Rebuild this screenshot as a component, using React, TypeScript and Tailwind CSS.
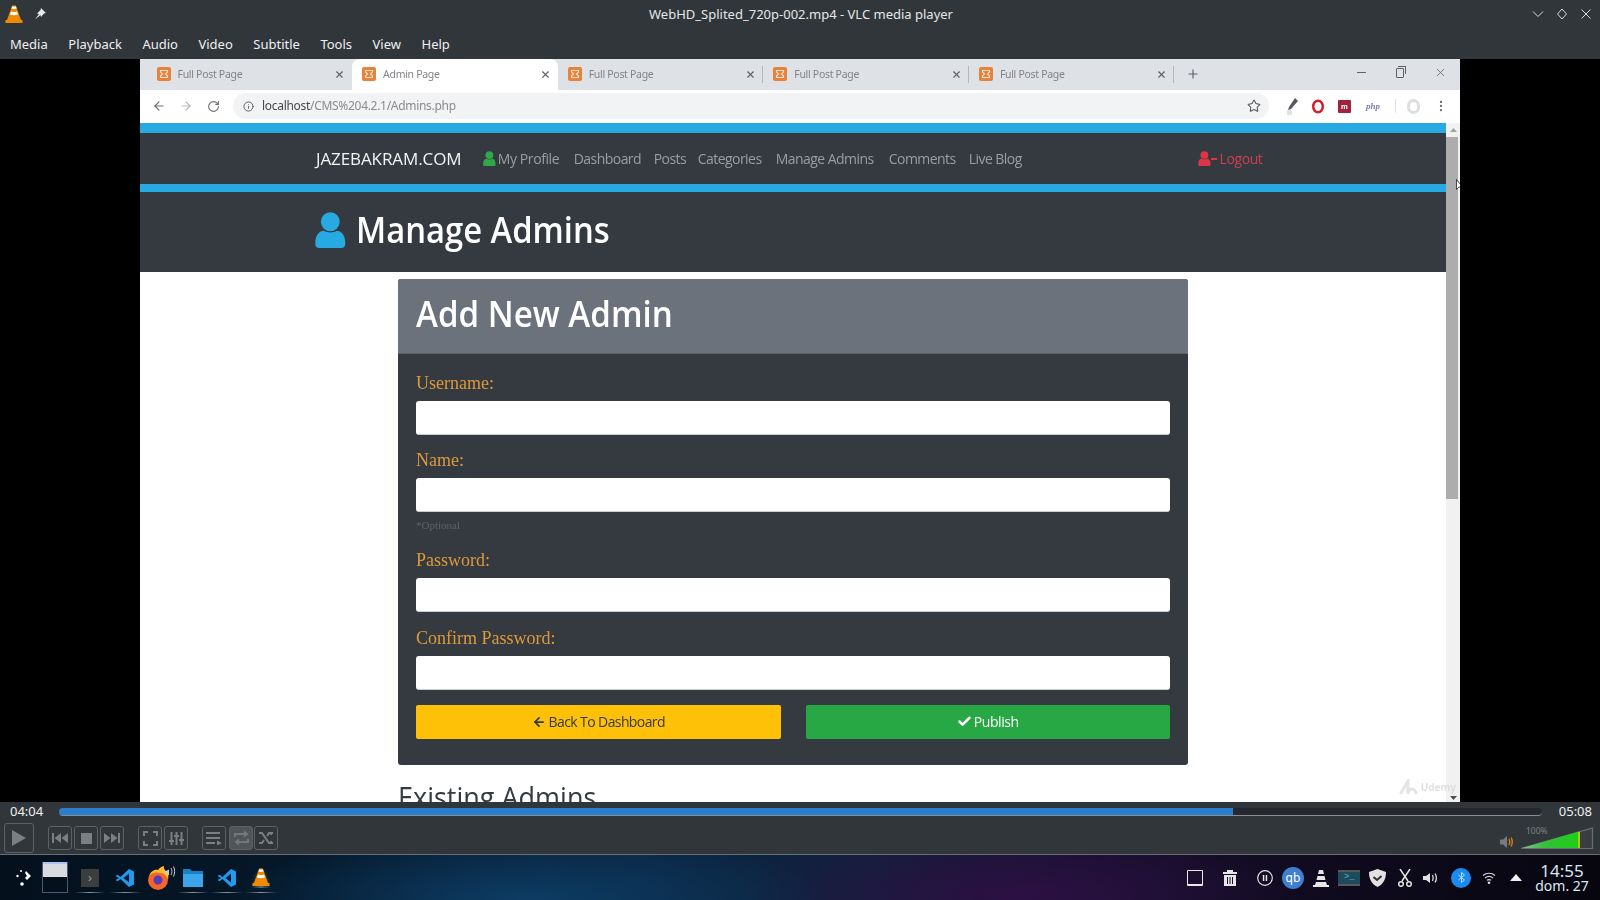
import { ArrowLeft, ArrowRight, Check, Info, MoreVertical, Plus, RotateCw, Star, X } from 'lucide-react';

const MENU = ['Media', 'Playback', 'Audio', 'Video', 'Subtitle', 'Tools', 'View', 'Help'];

const TABS = [
  { title: 'Full Post Page', active: false },
  { title: 'Admin Page', active: true },
  { title: 'Full Post Page', active: false },
  { title: 'Full Post Page', active: false },
  { title: 'Full Post Page', active: false },
];

const NAV = [
  { label: 'Dashboard', w: 'w-[66px]' },
  { label: 'Posts', w: 'w-[30px]' },
  { label: 'Categories', w: 'w-[64px]' },
  { label: 'Manage Admins', w: 'w-[99px]' },
  { label: 'Comments', w: 'w-[66px]' },
  { label: 'Live Blog', w: 'w-[55px]' },
];

function Cone({ size = 20, stripes = '#fff' }: { size?: number; stripes?: string }) {
  return (
    <svg width={size} height={size} viewBox="0 0 20 20">
      <path d="M8.200 1.500h3.600L17 16H3z" fill="#f08a00" />
      <path d="M7 7.500c2 .8 4 .8 6 0l1 3c-2.600 1-5.400 1-8 0z" fill={stripes} />
      <path d="M8 2.500h4l.6 2c-1.700.6-3.500.6-5.200 0z" fill={stripes} />
      <path d="M1.500 16h17v3h-17z" fill="#f08a00" />
    </svg>
  );
}

function Favicon() {
  return (
    <svg width="14" height="14" viewBox="0 0 14 14" className="shrink-0">
      <rect width="14" height="14" rx="2" fill="#e8823a" />
      <path d="M3.500 3.500h7V5l-2 2 2 2v1.500h-7V9l2-2-2-2z" stroke="#fbe3d2" strokeWidth="1.100" fill="none" />
    </svg>
  );
}

function PersonIcon({ size, color }: { size: number; color: string }) {
  return (
    <svg width={size * 0.85} height={size} viewBox="0 0 20 24" className="shrink-0">
      <circle cx="10" cy="6.500" r="6.300" fill={color} />
      <path d="M0 21c0-6 3-8.500 5.500-8.500 3 1.500 6 1.500 9 0C17 12.500 20 15 20 21c0 2-1 3-2.500 3h-15C1 24 0 23 0 21z" fill={color} />
    </svg>
  );
}

function ChromeTab({ title, active, divider }: { title: string; active: boolean; divider: boolean }) {
  return (
    <div className={`relative flex h-[31px] w-[205.600px] shrink-0 items-center pl-[10px] pr-[7px] ${active ? 'rounded-t-lg bg-white' : ''}`}>
      <Favicon />
      <span className="ml-[7px] flex-1 text-[10.500px] tracking-[-0.3px] text-[#808488]">{title}</span>
      <X size={11} strokeWidth={2.500} className="text-[#5f6368]" />
      {divider && <div className="absolute right-0 top-[7px] h-[17px] w-px bg-[#b4b7bb]" />}
    </div>
  );
}

function Field({ label, mt }: { label: string; mt: string }) {
  return (
    <div className={mt}>
      <div className="font-['Liberation_Serif',serif] text-[18px] leading-[22px] text-[#dd9a3c]">{label}</div>
      <div className="mt-[7px] h-[34px] rounded-[3px] border-b border-[#c9ccd0] bg-white" />
    </div>
  );
}

function CtlButton({ children, active, big }: { children: React.ReactNode; active?: boolean; big?: boolean }) {
  return (
    <div
      className={`flex shrink-0 items-center justify-center rounded-[3px] border border-[#5d6165] ${big ? 'h-[30px] w-[30px]' : 'h-[24px] w-[24px]'} ${active ? 'bg-[#50555a]' : ''}`}
    >
      {children}
    </div>
  );
}

function Controls() {
  const c = '#7b7e82';
  return (
    <div className="flex h-[32px] items-center pl-[4px] pr-[6px]">
      <CtlButton big>
        <svg width="16" height="18" viewBox="0 0 16 18"><path d="M1 1v16l14-8z" fill={c} /></svg>
      </CtlButton>
      <div className="ml-[14px] flex gap-[2px]">
        <CtlButton>
          <svg width="16" height="10" viewBox="0 0 16 10"><path d="M0 0h2v10H0zM9 0v10L2.500 5zM16 0v10L9.500 5z" fill={c} /></svg>
        </CtlButton>
        <CtlButton>
          <svg width="11" height="11" viewBox="0 0 11 11"><path d="M0 0h11v11H0z" fill={c} /></svg>
        </CtlButton>
        <CtlButton>
          <svg width="16" height="10" viewBox="0 0 16 10"><path d="M16 0h-2v10h2zM7 0v10l6.500-5zM0 0v10l6.500-5z" fill={c} /></svg>
        </CtlButton>
      </div>
      <div className="ml-[14px] flex gap-[2px]">
        <CtlButton>
          <svg width="15" height="15" viewBox="0 0 15 15" fill="none" stroke={c} strokeWidth="2"><path d="M1 5V1h4M10 1h4v4M14 10v4h-4M5 14H1v-4" /></svg>
        </CtlButton>
        <CtlButton>
          <svg width="15" height="15" viewBox="0 0 15 15" fill="none" stroke={c} strokeWidth="2"><path d="M2.500 1v13M7.500 1v13M12.500 1v13M0 10h5M5 5h5M10 9h5" /></svg>
        </CtlButton>
      </div>
      <div className="ml-[14px] flex gap-[3px]">
        <CtlButton>
          <svg width="16" height="13" viewBox="0 0 16 13"><path d="M0 0h14v2H0zM0 5h14v2H0zM0 10h9v2H0zM11 8.500l5 2.500-5 2.500z" fill={c} /></svg>
        </CtlButton>
        <CtlButton active>
          <svg width="15" height="14" viewBox="0 0 15 14" fill="none" stroke="#74777b" strokeWidth="2"><path d="M1 6V3h11M10 0.500l3 2.500-3 2.500M14 8v3H3M5 8.500L2 11l3 2.500" /></svg>
        </CtlButton>
        <div className="-ml-[2px]">
          <CtlButton>
            <svg width="15" height="13" viewBox="0 0 15 13" fill="none" stroke={c} strokeWidth="2"><path d="M0 1h3l7 10h4M0 11h3l2-3M8 4l2-3h4M12 0v3M12 9v3" /></svg>
          </CtlButton>
        </div>
      </div>
      <div className="flex-1" />
      <svg width="14" height="14" viewBox="0 0 14 14" className="mt-[8px]" fill="none">
        <path d="M0 4.500h3L7 1v12L3 9.500H0z" fill="#77797d" />
        <path d="M9 4c1 2 1 4 0 6M11 2.500c1.800 3 1.800 6 0 9" stroke="#d97b10" strokeWidth="1.400" />
      </svg>
      <div className="relative ml-[6px] h-[24px] w-[74px]">
        <span className="absolute left-[6px] top-[0px] font-['Noto_Sans',sans-serif] text-[8.500px] leading-[10px] text-[#7e8185]">100%</span>
        <svg width="74" height="24" viewBox="0 0 74 24" className="absolute inset-0">
          <path d="M1 22.500L72.500 2v20.500z" fill="#3a3e42" stroke="#6b6e72" strokeWidth="1.200" />
          <defs>
            <linearGradient id="volFill" x1="0" x2="1" y1="0" y2="0">
              <stop offset="0" stopColor="#7fc78a" />
              <stop offset="0.4" stopColor="#35bf3a" />
              <stop offset="1" stopColor="#1ccf14" />
            </linearGradient>
          </defs>
          <path d="M2 22L59 5.500V22z" fill="url(#volFill)" />
          <path d="M58 6h2v16h-2z" fill="#b6c90f" />
        </svg>
      </div>
    </div>
  );
}

function VsCode() {
  return (
    <svg width="20" height="20" viewBox="0 0 20 20">
      <path d="M14 1l5 2.500v13L14 19 5.500 11l-3 2.300L.5 12 4 10 .5 8l2-1.300 3 2.300z" fill="#1f9cf0" />
      <path d="M14 5.500L8.500 10l5.500 4.500z" fill="#071a2c" />
    </svg>
  );
}

// task manager entry: icon with the thin "running" line under it
function Task({ children, ml }: { children: React.ReactNode; ml: string }) {
  return (
    <div className={`relative flex h-[45px] shrink-0 items-center justify-center ${ml}`}>
      {children}
      <div className="absolute bottom-[7px] left-[-6px] right-[-6px] h-px bg-[linear-gradient(90deg,transparent,#8a96a2,transparent)]" />
    </div>
  );
}

function Taskbar() {
  return (
    <div className="flex h-[45px] items-center bg-[radial-gradient(ellipse_300px_70px_at_530px_45px,#0d3c64,transparent),radial-gradient(ellipse_280px_70px_at_1020px_40px,#2c1044,transparent),linear-gradient(90deg,#04101c_0%,#05192b_20%,#0a2540_40%,#10203c_55%,#170f2c_68%,#0e0a1c_85%,#07060f_100%)] pl-[16px] font-['Noto_Sans',sans-serif] text-white">
      <svg width="16" height="18" viewBox="0 0 16 18" className="shrink-0">
        <circle cx="5" cy="2" r="1" fill="#fff" />
        <circle cx="1.500" cy="7" r="1.200" fill="#fff" />
        <path d="M10 2l5 5-4 4-2-2 2-2-2-3z" fill="#fff" />
        <circle cx="6" cy="15" r="1.800" fill="#fff" />
      </svg>
      <div className="ml-[10px] h-[31px] w-[26px] shrink-0 border-x border-b border-[#4a5a6a] bg-[#04101c]">
        <div className="h-[15px] border-t-2 border-[#a9c4f0] bg-[#d8dce2]" />
      </div>
      <Task ml="ml-[13px]">
        <div className="flex h-[18px] w-[18px] items-center justify-center bg-[#3a3e3e] text-[13px] leading-none text-[#9a9d9d]">›</div>
      </Task>
      <Task ml="ml-[16px]"><VsCode /></Task>
      <svg width="28" height="26" viewBox="0 0 28 26" className="ml-[13px] shrink-0">
        <circle cx="10" cy="15" r="10" fill="#f2652b" />
        <path d="M1 11C3 5 8 4 10 5c2-3 5-4 6-4-.5 2 0 3 2 5 3 3 2.500 6 2 9-1-4-4-7-7-7-2 0-5-1-6 0-3 0-5 1-6 3z" fill="#fdb92e" />
        <circle cx="10" cy="15" r="4.500" fill="#5b3bb5" />
        <path d="M16 7l5-2.500v6z" fill="#c9ccd0" />
        <path d="M23 3c1.200 2 1.200 5 0 7M25.500 1.500c1.500 3 1.500 7 0 10" stroke="#c9ccd0" strokeWidth="1" fill="none" />
      </svg>
      <Task ml="ml-[7px]">
        <svg width="20" height="19" viewBox="0 0 20 19">
          <path d="M0 1h7l2 2h11v16H0z" fill="#1b7fc4" />
          <path d="M0 6h20v13H0z" fill="#3aa5e8" />
        </svg>
      </Task>
      <Task ml="ml-[14px]"><VsCode /></Task>
      <Task ml="ml-[14px]">
        <div className="rounded-t-full bg-[radial-gradient(ellipse_at_bottom,#5c6a78,transparent_70%)] pb-[1px]">
          <Cone size={20} />
        </div>
      </Task>

      <div className="flex-1" />

      <div className="h-[16px] w-[16px] shrink-0 rounded-[1px] border border-b-2 border-[#e8e8e8]" />
      <svg width="14" height="16" viewBox="0 0 14 16" className="ml-[20px] shrink-0">
        <path d="M0 2h4V0h6v2h4v2H0zM1 5h12v11H1z" fill="#e6e6e6" />
        <path d="M4.500 7v7M7 7v7M9.500 7v7" stroke="#1b0d2c" />
      </svg>
      <svg width="16" height="16" viewBox="0 0 16 16" className="ml-[20px] shrink-0">
        <circle cx="8" cy="8" r="7.300" fill="none" stroke="#e6e6e6" strokeWidth="1.200" />
        <path d="M5.800 5h1.500v6H5.800zM8.700 5h1.500v6H8.700z" fill="#e6e6e6" />
      </svg>
      <div className="ml-[9px] flex h-[22px] w-[22px] shrink-0 items-center justify-center rounded-full bg-[#3f7fd0] text-[12px] leading-none">qb</div>
      <svg width="16" height="18" viewBox="0 0 16 18" className="ml-[9px] shrink-0">
        <path d="M6 1h4l1 4H5zM4.500 7h7l1 4h-9zM3 13h10l1 3H2zM0 16h16v2H0z" fill="#e6e6e6" />
      </svg>
      <div className="ml-[9px] flex h-[16px] w-[22px] shrink-0 items-center border-y-2 border-[#55595c] bg-[#1e4a5c] pl-[6px] font-['Liberation_Mono',monospace] text-[9px] leading-none text-[#4ab3e0]">&gt;_</div>
      <svg width="17" height="18" viewBox="0 0 17 18" className="ml-[9px] shrink-0">
        <path d="M8.500 0L17 3c0 7-2.500 12-8.500 15C2.500 15 0 10 0 3z" fill="#e2e2e2" />
        <path d="M4.500 8l3.500 3 4.500-4" stroke="#333" strokeWidth="2" fill="none" />
      </svg>
      <svg width="14" height="18" viewBox="0 0 14 18" className="ml-[12px] shrink-0" fill="none" stroke="#e6e6e6" strokeWidth="1.500">
        <path d="M2 0l8 12M12 0L4 12" />
        <circle cx="3" cy="15" r="2.300" />
        <circle cx="11" cy="15" r="2.300" />
      </svg>
      <svg width="16" height="14" viewBox="0 0 16 14" className="ml-[11px] shrink-0" fill="none">
        <path d="M0 5h3l4-3v10L3 9H0z" fill="#e0e0e0" />
        <path d="M9.500 4c1 2 1 4 0 6M12 2.500c1.800 3 1.800 6 0 9" stroke="#e0e0e0" strokeWidth="1.300" />
      </svg>
      <div className="ml-[12px] flex h-[20px] w-[20px] shrink-0 items-center justify-center rounded-full bg-[#1a8cf0]">
        <svg width="7" height="11" viewBox="0 0 7 11" fill="none" stroke="#cfe6fb" strokeWidth="0.900"><path d="M0.500 3l6 5-3 2.500v-10l3 2.500-6 5" /></svg>
      </div>
      <svg width="14" height="12" viewBox="0 0 14 12" className="ml-[11px] shrink-0" fill="none" stroke="#d8d8d8" strokeWidth="1.200">
        <path d="M1 3.500c3.500-3 8.500-3 12 0M3 6c2.500-2 5.500-2 8 0M5 8.300c1.300-.9 2.700-.9 4 0" />
        <circle cx="7" cy="10.800" r="0.700" fill="#d8d8d8" />
      </svg>
      <svg width="12" height="7" viewBox="0 0 12 7" className="ml-[14px] shrink-0"><path d="M6 0l6 7H0z" fill="#f0f0f0" /></svg>
      <div className="ml-[14px] mr-[12px] flex w-[52px] shrink-0 flex-col items-center whitespace-nowrap text-[#dbe6f2]">
        <span className="text-[17px] leading-[17px]">14:55</span>
        <span className="text-[14px] leading-[14px]">dom. 27</span>
      </div>
    </div>
  );
}

export default function App() {
  return (
    <div className="flex h-[900px] w-[1600px] flex-col overflow-hidden bg-black font-['Noto_Sans',sans-serif]">
      {/* VLC title bar + menu */}
      <div className="flex h-[29px] items-center bg-[#31363b] pl-[4px] pr-[8px]">
        <Cone size={20} />
        <svg width="12" height="12" viewBox="0 0 12 12" className="ml-[10px]">
          <path d="M7 0l5 5-2 .5L7 9 6.500 7 1 11.500 5 6 3 5.500 6.500 2z" fill="#e8e8e8" />
        </svg>
        <div className="ml-[24px] flex-1 text-center text-[13px] text-[#e4e6e8]">WebHD_Splited_720p-002.mp4 - VLC media player</div>
        <div className="flex items-center gap-[12px] text-[#d8dadc]">
          <svg width="12" height="12" viewBox="0 0 12 12" fill="none" stroke="currentColor"><path d="M1 3.500l5 5 5-5" /></svg>
          <svg width="12" height="12" viewBox="0 0 12 12" fill="none" stroke="currentColor"><path d="M6 1l4.500 5L6 11 1.500 6z" /></svg>
          <svg width="12" height="12" viewBox="0 0 12 12" fill="none" stroke="currentColor"><path d="M1.500 1.500l9 9M10.500 1.500l-9 9" /></svg>
        </div>
      </div>
      <div className="flex h-[30px] items-start gap-[20.500px] bg-[#31363b] pl-[10px] pt-[2px] text-[13px] leading-[26px] text-[#eff0f1]">
        {MENU.map((m) => (
          <span key={m}>{m}</span>
        ))}
      </div>

      {/* video area */}
      <div className="flex h-[744px] justify-center overflow-hidden">
        <div className="flex h-[744px] w-[1320px] flex-col overflow-hidden bg-white blur-[0.4px]">
          {/* tab strip */}
          <div className="flex h-[31px] shrink-0 items-center bg-[#dee1e6] pl-[6.500px]">
            {TABS.map((t, i) => (
              <ChromeTab key={i} title={t.title} active={t.active} divider={i >= 2} />
            ))}
            <Plus size={14} strokeWidth={2} className="ml-[12px] text-[#5f6368]" />
            <div className="flex-1" />
            <div className="mb-[3px] mr-[13px] flex items-center gap-[30px] text-[#5f6368]">
              <div className="h-[1px] w-[9px] bg-[#5f6368]" />
              <div className="relative h-[10px] w-[8px] rounded-[1px] border border-[#5f6368]">
                <div className="absolute -right-[3px] -top-[3px] h-[8px] w-[8px] border-r border-t border-[#5f6368]" />
              </div>
              <X size={13} strokeWidth={1.500} />
            </div>
          </div>
          {/* toolbar */}
          <div className="flex h-[33px] shrink-0 items-center bg-white pl-[12px] pr-[12px]">
            <ArrowLeft size={14} strokeWidth={2} className="text-[#6b6e72]" />
            <ArrowRight size={14} strokeWidth={2} className="ml-[13px] text-[#b5b8bb]" />
            <RotateCw size={13} strokeWidth={2} className="ml-[14px] text-[#6b6e72]" />
            <div className="ml-[13px] flex h-[26px] w-[1036px] items-center rounded-full bg-[#f1f3f4] pl-[10px] pr-[8px]">
              <Info size={11} strokeWidth={2} className="text-[#55585c]" />
              <span className="ml-[8px] text-[12px] tracking-[-0.3px] text-[#8a8d90]">
                <span className="text-[#45484b]">localhost</span>/CMS%204.2.1/Admins.php
              </span>
              <div className="flex-1" />
              <Star size={14} strokeWidth={1.800} className="text-[#55585c]" />
            </div>
            <svg width="14" height="18" viewBox="0 0 14 18" className="ml-[17px]">
              <path d="M9 1l3 3-7 8-3 1 1-3z" fill="#55585c" />
              <rect x="1" y="13" width="5" height="5" fill="#dfe1e3" />
            </svg>
            <svg width="14" height="15" viewBox="0 0 14 15" className="ml-[11px]">
              <ellipse cx="7" cy="7.500" rx="4.800" ry="5.800" fill="none" stroke="#d3202c" strokeWidth="2.500" />
            </svg>
            <div className="ml-[13px] flex h-[13px] w-[13px] items-center justify-center rounded-[1px] bg-[#a3223b] text-[7px] leading-none font-bold text-white">m</div>
            <span className="ml-[15px] font-['Liberation_Serif',serif] text-[9px] font-bold text-[#7b7fb0] italic">php</span>
            <div className="ml-[15px] h-[14px] w-px bg-[#e0e0e0]" />
            <div className="ml-[11px] h-[15px] w-[13px] rounded-full border-[3px] border-[#dcdee0]" />
            <MoreVertical size={14} className="ml-[14px] text-[#6b6e72]" />
          </div>

          {/* page */}
          <div className="relative flex min-h-0 flex-1">
            <div className="min-w-0 flex-1 overflow-hidden font-['Open_Sans',sans-serif]">
              <div className="h-[10px] bg-[#27a9e1]" />
              <div className="flex h-[51px] items-center bg-[#343a40] pl-[176px]">
                <span className="w-[145px] text-[17px] tracking-[-0.1px] whitespace-nowrap text-[#f2f3f4]">JAZEBAKRAM.COM</span>
                <div className="ml-[22px] flex items-center">
                  <PersonIcon size={15} color="#2ea84a" />
                  <span className="ml-[2px] w-[62px] text-[14px] tracking-[-0.4px] whitespace-nowrap text-[#9b9ea1]">My Profile</span>
                </div>
                {NAV.map((n) => (
                  <span key={n.label} className={`ml-[14px] ${n.w} text-[14px] tracking-[-0.55px] whitespace-nowrap text-[#9b9ea1]`}>
                    {n.label}
                  </span>
                ))}
                <div className="ml-[174px] flex items-center">
                  <PersonIcon size={15} color="#dc3545" />
                  <svg width="6" height="6" viewBox="0 0 6 6" className="mt-[1px]"><path d="M0 2h6v2H0z" fill="#dc3545" /></svg>
                  <span className="ml-[3px] text-[14px] tracking-[-0.4px] text-[#c9414e]">Logout</span>
                </div>
              </div>
              <div className="h-[8px] bg-[#27a9e1]" />
              <div className="flex h-[80px] items-center bg-[#343a40] pb-[4px] pl-[175px]">
                <PersonIcon size={36} color="#27a9e1" />
                <h1 className="ml-[10px] origin-left scale-x-[0.91] text-[36px] leading-none font-semibold whitespace-nowrap text-white">Manage Admins</h1>
              </div>
              <div className="ml-[258px] mt-[7px] w-[790px]">
                <div className="overflow-hidden rounded-[3px] bg-[#343a40]">
                  <div className="flex h-[75px] items-center border-b border-[#5f646a] bg-[#6c727c] pb-[4px] pl-[18px]">
                    <h2 className="origin-left scale-x-[0.92] text-[36px] leading-none font-semibold whitespace-nowrap text-white">Add New Admin</h2>
                  </div>
                  <div className="h-[411px] px-[18px] pt-[18px]">
                    <Field label="Username:" mt="" />
                    <Field label="Name:" mt="mt-[14px]" />
                    <div className="mt-[6px] h-[15px] font-['Liberation_Serif',serif] text-[11px] leading-[15px] text-[#5d6168]">*Optional</div>
                    <Field label="Password:" mt="mt-[16px]" />
                    <Field label="Confirm Password:" mt="mt-[15px]" />
                    <div className="mt-[15px] flex gap-[25px]">
                      <div className="flex h-[34px] flex-1 items-center justify-center rounded-[2px] bg-[#ffc107] text-[14px] tracking-[-0.6px] text-[#343a40]">
                        <ArrowLeft size={14} strokeWidth={3} className="mr-[3px]" />
                        Back To Dashboard
                      </div>
                      <div className="flex h-[34px] flex-1 items-center justify-center rounded-[2px] bg-[#28a745] text-[14px] tracking-[-0.4px] text-white">
                        <Check size={15} strokeWidth={4} className="mr-[2px]" />
                        Publish
                      </div>
                    </div>
                  </div>
                </div>
                <h2 className="mt-[12px] h-[28px] origin-left scale-x-[0.9] overflow-hidden text-[30px] leading-[40px] font-medium whitespace-nowrap text-[#343a40]">Existing Admins</h2>
              </div>
            </div>
            {/* scrollbar */}
            <div className="relative flex w-[14px] shrink-0 flex-col items-center bg-[#f1f1f1]">
              <svg width="7" height="4" viewBox="0 0 7 4" className="mt-[5px]"><path d="M3.500 0L7 4H0z" fill="#a3a3a3" /></svg>
              <div className="mt-[5px] h-[362px] w-full border-r-2 border-[#f1f1f1] bg-[#adadad]" />
              <div className="flex-1" />
              <svg width="7" height="4" viewBox="0 0 7 4" className="mb-[3px]"><path d="M3.500 4L7 0H0z" fill="#505050" /></svg>
              {/* mouse pointer caught in the frame */}
              <svg width="7" height="12" viewBox="0 0 7 12" className="absolute left-[10px] top-[56px]">
                <path d="M0.500 0.500v10l2.500-2.500 3.500 0z" fill="#fff" stroke="#222" strokeWidth="0.800" />
              </svg>
            </div>
            {/* course watermark */}
            <div className="absolute bottom-[7px] right-[4px] flex items-center opacity-70">
              <svg width="20" height="17" viewBox="0 0 20 17" fill="none" stroke="#d9d9d9" strokeWidth="3">
                <path d="M1.500 15L9 2v13M9 15c0-3 2-5 4-5s4 2 4 5" />
              </svg>
              <span className="ml-[2px] text-[10px] leading-none font-bold text-[#d4d4d4]">Udemy</span>
            </div>
          </div>
        </div>
      </div>

      {/* player controls */}
      <div className="h-[52px] bg-[#31363b]">
        <div className="flex h-[20px] items-center pl-[10px] pr-[8px] text-[13px] text-[#eff0f1]">
          <span className="w-[49px]">04:04</span>
          <div className="relative h-[8px] flex-1 rounded-[4px] border-b border-[#8b8e91] bg-[#25292d]">
            <div className="h-full w-[79.200%] rounded-l-[4px] bg-[#2a7fd1]" />
          </div>
          <span className="ml-[17px]">05:08</span>
        </div>
        <Controls />
      </div>
      <div className="h-px bg-[#6a6e72]" />
      <Taskbar />
    </div>
  );
}
